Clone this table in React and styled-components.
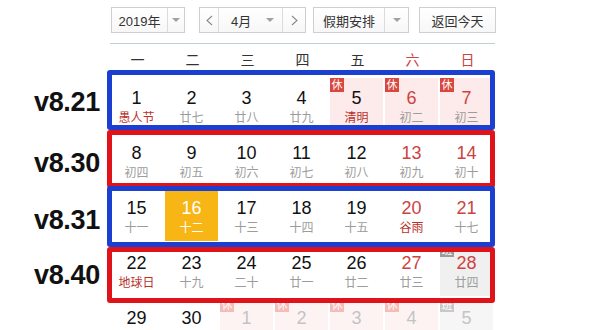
import styled, { createGlobalStyle, css } from "styled-components";

const GlobalStyle = createGlobalStyle`
  html, body {
    margin: 0;
    padding: 0;
    background: #fff;
  }
  body {
    font-family: "Liberation Sans", "Noto Sans CJK SC", Arial, sans-serif;
    color: #333;
  }
`;

const RED = "#cc4341";
const FEST = "#b8322c";

const Page = styled.div`
  width: 598px;
  height: 330px;
  overflow: hidden;
`;

const Toolbar = styled.div`
  display: flex;
  align-items: center;
  padding: 7px 0 0 111px;
  height: 26px;
`;

const Control = styled.div`
  display: flex;
  height: 26px;
  box-sizing: border-box;
  border: 1px solid #cfcfcf;
  background: linear-gradient(#fff, #f7f7f7);
  margin-right: ${(p) => p.$gap || 0}px;
  font-size: 13px;
  color: #333;
`;

const Part = styled.div`
  display: flex;
  align-items: center;
  justify-content: ${(p) => (p.$left ? "flex-start" : "center")};
  width: ${(p) => p.$w}px;
  padding-left: ${(p) => p.$pl || 0}px;
  box-sizing: border-box;
  & + & {
    border-left: 1px solid #dcdcdc;
  }
`;

const Caret = styled.span`
  width: 0;
  height: 0;
  border-left: 4px solid transparent;
  border-right: 4px solid transparent;
  border-top: 4px solid #a0a0a0;
  margin-left: ${(p) => p.$ml || 0}px;
`;

const Chevron = ({ dir }) => (
  <svg width="7" height="11" viewBox="0 0 7 11">
    <polyline
      points={dir === "left" ? "6,1 1,5.5 6,10" : "1,1 6,5.5 1,10"}
      fill="none"
      stroke="#8a8a8a"
      strokeWidth="1.1"
    />
  </svg>
);

const Calendar = styled.div`
  margin-top: 10px;
`;

const Header = styled.div`
  margin-left: 110px;
  width: 385px;
  border-top: 1px solid #bcd2d6;
  display: grid;
  grid-template-columns: repeat(7, 55px);
  height: 33px;
  margin-bottom: 1px;
`;

const WeekName = styled.div`
  text-align: center;
  line-height: 32px;
  font-size: 14px;
  color: ${(p) => (p.$weekend ? RED : "#333")};
`;

const WeekRow = styled.div`
  display: flex;
  margin-bottom: 2px;
`;

const Version = styled.div`
  width: 100px;
  margin-right: 10px;
  height: 53px;
  box-sizing: border-box;
  display: flex;
  align-items: center;
  justify-content: flex-end;
  font-size: 27px;
  font-weight: bold;
  color: #111;
  letter-spacing: -0.3px;
  padding: ${(p) => (p.$dy > 0 ? `${p.$dy * 2}px 0 0` : `0 0 ${-p.$dy * 2}px`)};
`;

const Days = styled.div`
  position: relative;
  display: grid;
  grid-template-columns: repeat(7, 53px);
  column-gap: 2px;
`;

const Frame = styled.div`
  position: absolute;
  left: -3px;
  right: -2px;
  top: ${(p) => p.$top}px;
  bottom: ${(p) => p.$bottom}px;
  border: 5px solid ${(p) => (p.$blue ? "#1b3fd0" : "#e0131b")};
  border-radius: 3px;
  z-index: ${(p) => (p.$blue ? 2 : 1)};
  pointer-events: none;
`;

const Cell = styled.div`
  position: relative;
  height: 53px;
  box-sizing: border-box;
  padding-top: 10px;
  display: flex;
  flex-direction: column;
  align-items: center;
  background: ${(p) =>
    p.$kind === "today"
      ? "#f8b516"
      : p.$kind === "rest"
      ? p.$faded
        ? "#fdf3f3"
        : "#fdeaea"
      : p.$kind === "work"
      ? p.$faded
        ? "#f6f6f6"
        : "#f0f0f0"
      : "transparent"};
`;

const Num = styled.div`
  font-size: 18px;
  line-height: 20px;
  color: ${(p) =>
    p.$today ? "#fff" : p.$faded ? "#c4c4c4" : p.$weekend ? RED : "#111"};
`;

const Lunar = styled.div`
  margin-top: 2px;
  font-size: 12px;
  line-height: 16px;
  color: ${(p) =>
    p.$today ? "#fff" : p.$faded ? "#d0d0d0" : p.$fest ? FEST : "#9c9c9c"};
`;

const Badge = styled.span`
  position: absolute;
  left: 0;
  top: 0;
  width: 14px;
  height: 14px;
  font-size: 11px;
  line-height: 14px;
  text-align: center;
  color: #fff;
  ${(p) =>
    p.$work
      ? css`
          background: ${p.$faded ? "#c9c9c9" : "#9b9b9b"};
        `
      : css`
          background: ${p.$faded ? "#f4bcb7" : "#d9473e"};
        `}
`;

const weekNames = ["一", "二", "三", "四", "五", "六", "日"];

const d = (n, lunar, opts = {}) => ({ n, lunar, ...opts });

const weeks = [
  {
    label: "v8.21",
    blue: true,
    top: -8,
    bottom: 1,
    dy: -2.5,
    days: [
      d(1, "愚人节", { fest: true }),
      d(2, "廿七"),
      d(3, "廿八"),
      d(4, "廿九"),
      d(5, "清明", { fest: true, kind: "rest" }),
      d(6, "初二", { kind: "rest" }),
      d(7, "初三", { kind: "rest" }),
    ],
  },
  {
    label: "v8.30",
    top: -3,
    bottom: -2,
    dy: 3.5,
    days: [
      d(8, "初四"),
      d(9, "初五"),
      d(10, "初六"),
      d(11, "初七"),
      d(12, "初八"),
      d(13, "初九"),
      d(14, "初十"),
    ],
  },
  {
    label: "v8.31",
    blue: true,
    top: -2,
    bottom: -6,
    dy: 5.5,
    days: [
      d(15, "十一"),
      d(16, "十二", { kind: "today" }),
      d(17, "十三"),
      d(18, "十四"),
      d(19, "十五"),
      d(20, "谷雨", { fest: true }),
      d(21, "十七"),
    ],
  },
  {
    label: "v8.40",
    top: 4,
    bottom: -7,
    dy: 5.5,
    days: [
      d(22, "地球日", { fest: true }),
      d(23, "十九"),
      d(24, "二十"),
      d(25, "廿一"),
      d(26, "廿二"),
      d(27, "廿三"),
      d(28, "廿四", { kind: "work" }),
    ],
  },
  {
    // last row is cut by the window, its lunar line falls outside
    days: [
      d(29),
      d(30),
      d(1, null, { kind: "rest", faded: true }),
      d(2, null, { kind: "rest", faded: true }),
      d(3, null, { kind: "rest", faded: true }),
      d(4, null, { kind: "rest", faded: true }),
      d(5, null, { kind: "work", faded: true }),
    ],
  },
];

export default function App() {
  return (
    <Page>
      <GlobalStyle />
      <Toolbar>
        <Control $gap={14}>
          <Part $w={55}>2019年</Part>
          <Part $w={17}>
            <Caret />
          </Part>
        </Control>
        <Control $gap={7}>
          <Part $w={18}>
            <Chevron dir="left" />
          </Part>
          <Part $w={64} $left $pl={12}>
            4月
            <Caret $ml={15} />
          </Part>
          <Part $w={23}>
            <Chevron dir="right" />
          </Part>
        </Control>
        <Control $gap={10}>
          <Part $w={70}>假期安排</Part>
          <Part $w={24}>
            <Caret />
          </Part>
        </Control>
        <Control>
          <Part $w={75}>返回今天</Part>
        </Control>
      </Toolbar>

      <Calendar>
        <Header>
          {weekNames.map((w, i) => (
            <WeekName key={w} $weekend={i > 4}>
              {w}
            </WeekName>
          ))}
        </Header>
        {weeks.map((week, wi) => (
          <WeekRow key={wi}>
            <Version $dy={week.dy || 0}>{week.label}</Version>
            <Days>
              {week.days.map((day, i) => {
                const weekend = i > 4;
                const today = day.kind === "today";
                return (
                  <Cell key={i} $kind={day.kind} $faded={day.faded}>
                    {(day.kind === "rest" || day.kind === "work") && (
                      <Badge $work={day.kind === "work"} $faded={day.faded}>
                        {day.kind === "work" ? "班" : "休"}
                      </Badge>
                    )}
                    <Num $weekend={weekend} $today={today} $faded={day.faded}>
                      {day.n}
                    </Num>
                    {day.lunar && (
                      <Lunar $fest={day.fest} $today={today} $faded={day.faded}>
                        {day.lunar}
                      </Lunar>
                    )}
                  </Cell>
                );
              })}
              {week.label && (
                <Frame $blue={week.blue} $top={week.top} $bottom={week.bottom} />
              )}
            </Days>
          </WeekRow>
        ))}
      </Calendar>
    </Page>
  );
}
